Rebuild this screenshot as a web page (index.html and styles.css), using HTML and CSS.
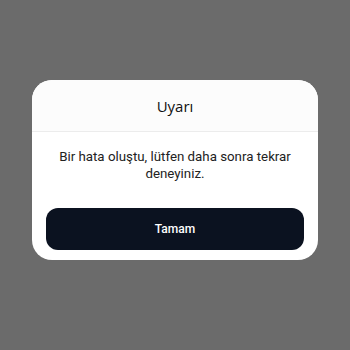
FILE: index.html
```html
<!DOCTYPE html>
<html>
<head>
<meta charset="utf-8">
<link rel="stylesheet" href="styles.css">
</head>
<body>
<div class="screen">
  <div class="dialog">
    <div class="header">Uyarı</div>
    <div class="body">
      <p class="message">Bir hata oluştu, lütfen daha sonra tekrar deneyiniz.</p>
      <button class="btn">Tamam</button>
    </div>
  </div>
</div>
</body>
</html>
```
FILE: styles.css
```css
html, body {
  margin: 0;
  padding: 0;
}
body {
  width: 350px;
  height: 350px;
  background: #6b6b6b;
  font-family: Roboto, "Liberation Sans", sans-serif;
}
.screen {
  width: 350px;
  height: 350px;
  display: flex;
  justify-content: center;
  padding-top: 80px;
  box-sizing: border-box;
}
.dialog {
  width: 286px;
  height: 180px;
  background: #ffffff;
  border-radius: 20px;
  overflow: hidden;
  display: flex;
  flex-direction: column;
}
.header {
  height: 52px;
  border-bottom: 1px solid #ececec;
  display: flex;
  align-items: center;
  justify-content: center;
  font-family: "Open Sans", Inter, sans-serif;
  font-size: 15px;
  font-weight: 500;
  color: #111;
  background: #fcfcfc;
  padding-top: 1px;
  box-sizing: border-box;
}
.body {
  padding: 16px 14px 10px;
  display: flex;
  flex-direction: column;
}
.message {
  margin: 0 8px;
  text-align: center;
  font-size: 13.3px;
  line-height: 17px;
  color: #222;
}
.btn {
  margin-top: 26px;
  height: 42px;
  border: none;
  border-radius: 12px;
  background: #0b1220;
  color: #fff;
  font-family: Roboto, sans-serif;
  font-weight: 500;
  font-size: 12px;
}
```
